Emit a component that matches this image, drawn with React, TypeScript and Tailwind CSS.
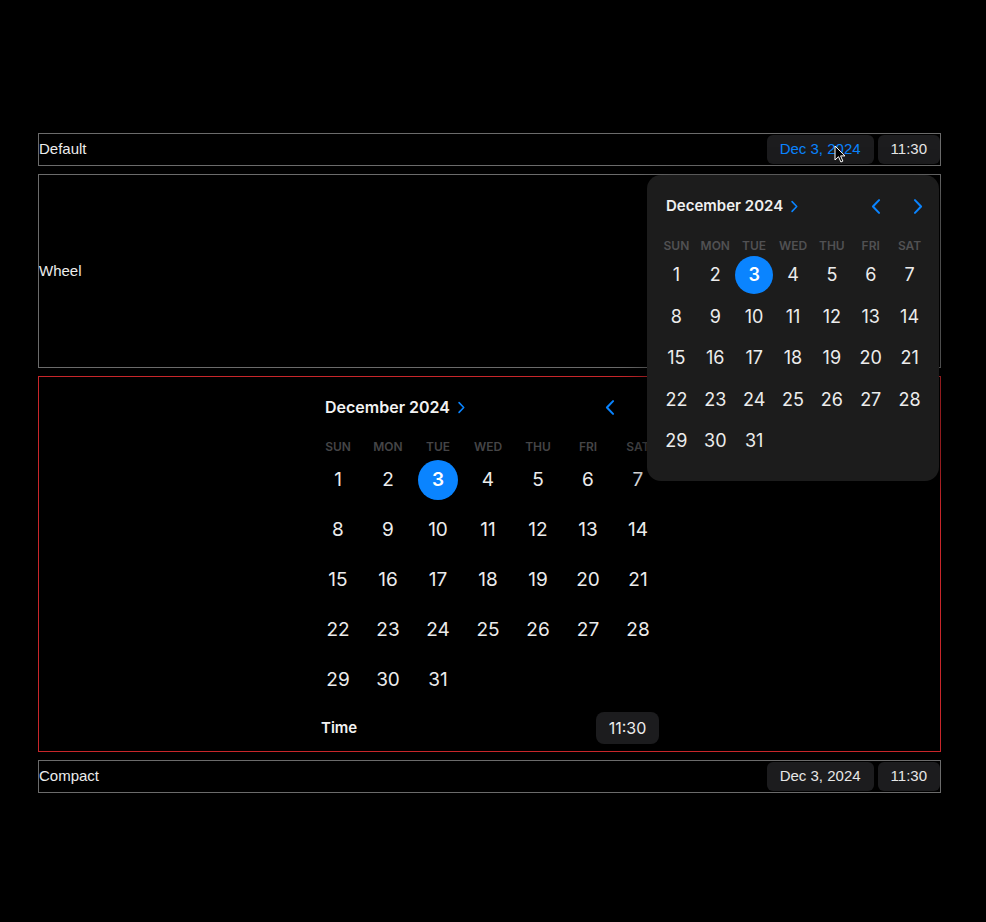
import React from "react";

const WEEKDAYS = ["SUN", "MON", "TUE", "WED", "THU", "FRI", "SAT"];
const DAYS = Array.from({ length: 31 }, (_, i) => i + 1);

function Chevron({ dir, className }: { dir: "left" | "right"; className?: string }) {
  return (
    <svg viewBox="0 0 12 20" className={className} fill="none" stroke="#0a84ff" strokeWidth={2.4} strokeLinecap="round" strokeLinejoin="round">
      {dir === "left" ? <path d="M9 2.5 1.8 10 9 17.5" /> : <path d="M3 2.5 10.2 10 3 17.5" />}
    </svg>
  );
}

function PillButton({ children, blue }: { children: React.ReactNode; blue?: boolean }) {
  return (
    <div
      className={`flex h-[29px] items-center rounded-[6px] bg-[#1c1c1e] px-[13px] text-[15px] ${blue ? "text-[#0a84ff]" : "text-[#e6e6e6]"}`}
    >
      {children}
    </div>
  );
}

function Row({ label, blue }: { label: string; blue?: boolean }) {
  return (
    <div className="flex h-[33px] items-center justify-between border border-[#6b6b6b]">
      <span className="text-[15px] text-[#ececec]">{label}</span>
      <div className="flex items-center gap-[4px]">
        <PillButton blue={blue}>Dec 3, 2024</PillButton>
        <PillButton>11:30</PillButton>
      </div>
    </div>
  );
}

function InlineCalendar() {
  return (
    <div className="ml-[274px] w-[350px] pt-[10px] font-['Inter',sans-serif]">
      <div className="flex h-10 items-center justify-between pl-3 pr-[6px]">
        <div className="flex items-center gap-[7px]">
          <span className="text-[16px] font-semibold text-[#f2f2f2]">December 2024</span>
          <Chevron dir="right" className="h-[13px] w-[8px]" />
        </div>
        <div className="flex items-center gap-[30px]">
          <Chevron dir="left" className="h-[17px] w-[11px]" />
          <Chevron dir="right" className="h-[17px] w-[11px]" />
        </div>
      </div>
      <div className="mt-[11px] grid h-4 grid-cols-7 items-center">
        {WEEKDAYS.map((d) => (
          <span key={d} className="text-center text-[12px] font-semibold text-[#454547]">
            {d}
          </span>
        ))}
      </div>
      <div className="mt-px grid grid-cols-7">
        {DAYS.map((d) => (
          <div key={d} className="flex h-[50px] items-center justify-center">
            {d === 3 ? (
              <span className="flex h-10 w-10 items-center justify-center rounded-full bg-[#0a84ff] text-[19px] font-semibold text-white">
                3
              </span>
            ) : (
              <span className="text-[19px] text-[#ececec]">{d}</span>
            )}
          </div>
        ))}
      </div>
      <div className="mt-[7px] flex h-8 items-center justify-between pl-2 pr-1">
        <span className="text-[15px] font-semibold text-[#f2f2f2]">Time</span>
        <span className="flex h-8 w-[63px] items-center justify-center rounded-lg bg-[#1c1c1e] text-[16px] text-[#ececec]">
          11:30
        </span>
      </div>
    </div>
  );
}

function PopupCalendar() {
  return (
    <div className="absolute left-[647px] top-[175px] h-[306px] w-[292px] rounded-[14px] bg-[#1c1c1c] px-[10px] pt-[13px] font-['Inter',sans-serif] shadow-[0_8px_30px_rgba(0,0,0,0.6)]">
      <div className="flex h-9 items-center justify-between pl-[9px] pr-[6px]">
        <div className="flex items-center gap-[7px]">
          <span className="text-[15px] font-semibold text-[#f0f0f0]">December 2024</span>
          <Chevron dir="right" className="h-[13px] w-[8px]" />
        </div>
        <div className="flex items-center gap-[30px]">
          <Chevron dir="left" className="h-[17px] w-[11px]" />
          <Chevron dir="right" className="h-[17px] w-[11px]" />
        </div>
      </div>
      <div className="mt-[13px] grid h-4 grid-cols-7 items-center">
        {WEEKDAYS.map((d) => (
          <span key={d} className="text-center text-[12px] font-semibold text-[#515153]">
            {d}
          </span>
        ))}
      </div>
      <div className="mt-px grid grid-cols-7">
        {DAYS.map((d) => (
          <div key={d} className="flex h-[41.5px] items-center justify-center">
            {d === 3 ? (
              <span className="flex h-[38px] w-[38px] items-center justify-center rounded-full bg-[#0a84ff] text-[18px] font-semibold text-white">
                3
              </span>
            ) : (
              <span className="text-[18px] text-[#ececec]">{d}</span>
            )}
          </div>
        ))}
      </div>
    </div>
  );
}

function Cursor() {
  return (
    <svg viewBox="0 0 12 18" className="absolute left-[834px] top-[145px] h-[18px] w-[12px]">
      <path d="M1 1v14l3.5-3.3 2.4 5.3 2-0.9-2.3-5.2H11z" fill="#000" stroke="#fff" strokeWidth={1} strokeLinejoin="round" />
    </svg>
  );
}

export default function App() {
  return (
    <div className="relative min-h-[922px] bg-black pt-[133px] font-['Liberation_Sans',Arial,sans-serif]">
      <div className="ml-[38px] flex w-[903px] flex-col gap-2">
        <Row label="Default" blue />
        <div className="flex h-[194px] items-center border border-[#6b6b6b]">
          <span className="text-[15px] text-[#ececec]">Wheel</span>
        </div>
        <div className="h-[376px] border border-[#c8262a]">
          <InlineCalendar />
        </div>
        <Row label="Compact" />
      </div>
      <PopupCalendar />
      <Cursor />
    </div>
  );
}
